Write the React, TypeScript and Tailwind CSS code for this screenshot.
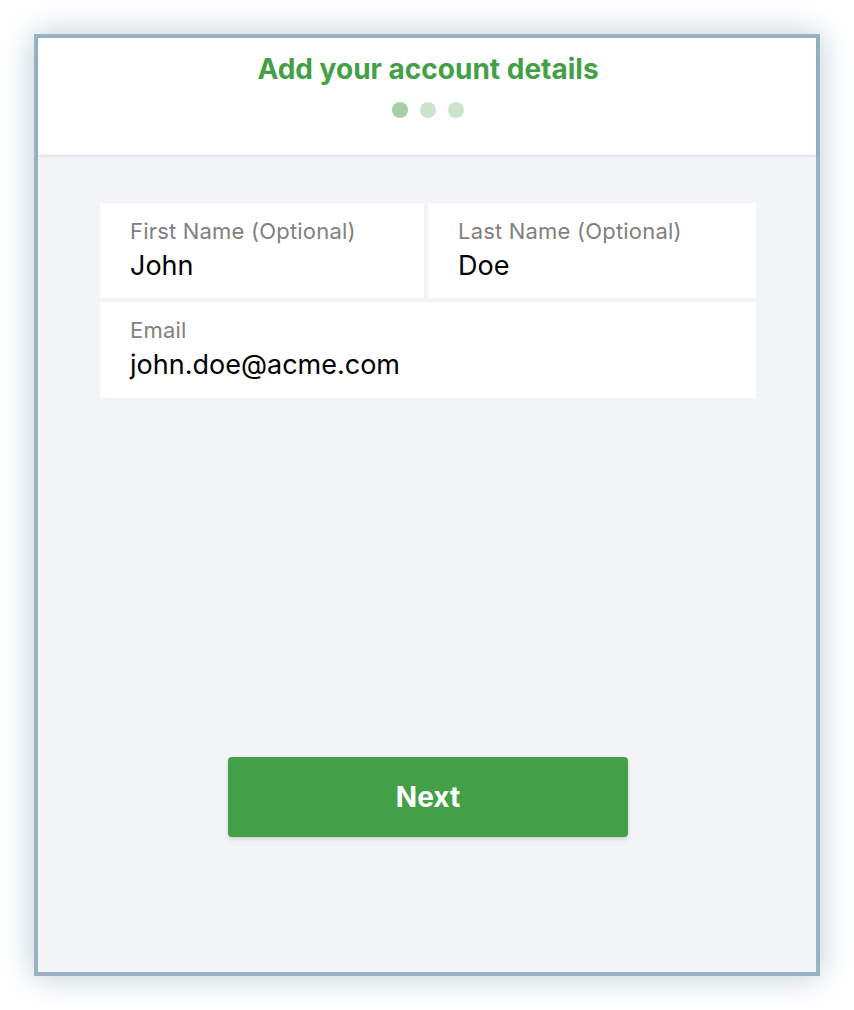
import React from 'react';

const font = { fontFamily: 'Inter, "Liberation Sans", sans-serif' };

function Field({ label, value, className = '' }: { label: string; value: string; className?: string }) {
  return (
    <div className={`bg-white pl-[30px] pt-[14px] ${className}`}>
      <div className="text-[22px] leading-[28px] tracking-[0.2px] text-[#808080]">{label}</div>
      <div className="text-[27px] leading-[42px] text-black">{value}</div>
    </div>
  );
}

export default function App() {
  return (
    <div className="w-[854px] h-[1010px] bg-white pt-[34px] pl-[34px]" style={font}>
      <div className="w-[786px] h-[942px] border-4 border-[#97b3c3] bg-[#f2f4f8] flex flex-col shadow-[0_0_30px_rgba(100,140,165,0.45)]">
        <div className="h-[117px] bg-white flex flex-col items-center pt-[13px] pl-[2px] shadow-[0_1px_3px_rgba(0,0,0,0.12)] relative">
          <h1 className="text-[28px] leading-[36px] font-bold text-[#43a047]">Add your account details</h1>
          <div className="flex gap-[12px] mt-[15px]">
            <span className="w-[16px] h-[16px] rounded-full bg-[#a5cfa6]" />
            <span className="w-[16px] h-[16px] rounded-full bg-[#cce3cc]" />
            <span className="w-[16px] h-[16px] rounded-full bg-[#cce3cc]" />
          </div>
        </div>

        <div className="flex-1 flex flex-col items-center pt-[48px] pl-[2px]">
          <div className="w-[656px] flex flex-col gap-[4px]">
            <div className="grid grid-cols-[324px_328px] gap-[4px]">
              <Field label="First Name (Optional)" value="John" className="h-[95px]" />
              <Field label="Last Name (Optional)" value="Doe" className="h-[95px]" />
            </div>
            <Field label="Email" value="john.doe@acme.com" className="h-[96px]" />
          </div>

          <button className="mt-[359px] w-[400px] h-[80px] rounded-[4px] bg-[#43a047] text-white text-[28px] font-bold shadow-[0_2px_4px_rgba(0,0,0,0.15)]">
            Next
          </button>
        </div>
      </div>
    </div>
  );
}
